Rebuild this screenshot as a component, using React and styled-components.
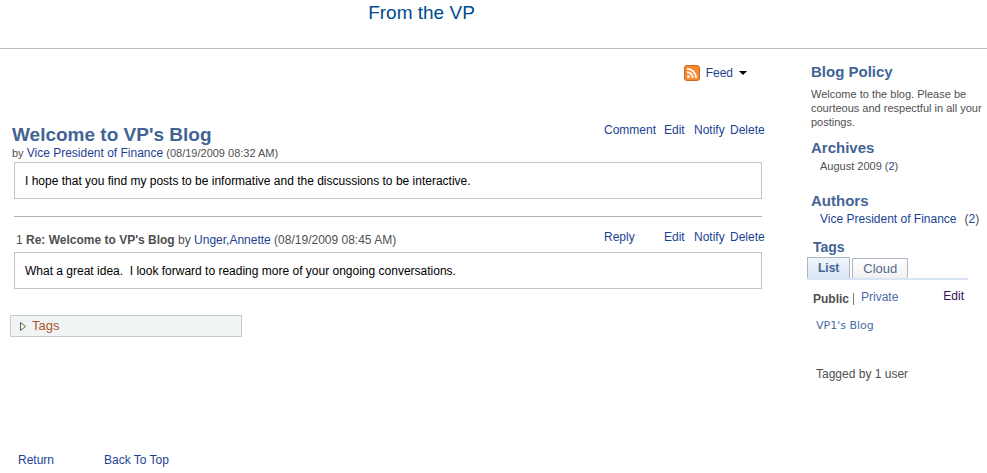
import React, { useState } from "react";
import styled, { createGlobalStyle } from "styled-components";

const GlobalStyle = createGlobalStyle`
  * {
    box-sizing: border-box;
  }
  body {
    margin: 0;
    background-color: #fff;
    color: #505050;
    font-family: "Liberation Sans", Arial, sans-serif;
    font-size: 12px;
    line-height: 14px;
  }
  h1, h2, h3, p {
    margin: 0;
  }
  button {
    font: inherit;
    margin: 0;
    padding: 0;
    border: 0;
    background: none;
    cursor: pointer;
  }
`;

const Header = styled.header`
  height: 49px;
  padding-right: 144px;
  border-bottom: 1px solid #bbb;
  text-align: center;
`;

const PageTitle = styled.h1`
  color: #004b91;
  font-size: 19px;
  font-weight: normal;
  line-height: 26px;
`;

const Columns = styled.div`
  display: flex;
  align-items: flex-start;
  gap: 41px;
`;

const Main = styled.main`
  flex: 1;
  padding: 16px 0 0 10px;
`;

const Link = styled.a`
  color: ${(props) => props.$color || "#1c3f94"};
  text-decoration: none;
`;

const FeedRow = styled.div`
  display: flex;
  justify-content: flex-end;
  padding-right: 19px;
`;

const FeedButton = styled.button`
  display: flex;
  align-items: center;
  gap: 6px;
  height: 16px;
  color: #1c3f94;
`;

const PostHeader = styled.div`
  display: flex;
  justify-content: space-between;
  align-items: flex-start;
  margin-top: ${(props) => props.$top}px;
`;

const PostTitle = styled.h2`
  padding: 1px 0 0 2px;
  color: #426494;
  font-size: 19px;
  line-height: 22px;
`;

const Byline = styled.p`
  padding-left: 2px;
  font-size: 11px;

  a {
    font-size: 12px;
  }
`;

const ReplyTitle = styled.p`
  padding: 3px 0 3px 6px;
`;

const Actions = styled.nav`
  display: grid;
  grid-template-columns: 60px 30px 36px 36px;
  white-space: nowrap;

  a:nth-child(2) {
    grid-column: 2;
  }
`;

const PostBody = styled.p`
  margin: 2px 4px 0;
  padding: 11px 10px 9px;
  border: 1px solid #c4c4c4;
  color: #000;
  line-height: 15px;
  white-space: pre-wrap;
`;

const Divider = styled.hr`
  margin: 17px 4px 0;
  border: 0;
  border-top: 1px solid #b4b4b4;
`;

const TagsToggle = styled.button`
  display: flex;
  align-items: center;
  gap: 6px;
  width: 232px;
  height: 22px;
  margin-top: 26px;
  padding-left: 9px;
  border: 1px solid #c5ccd1;
  background-color: #f0f4f5;
  color: #ad5728;
  font-size: 13px;
`;

const Footer = styled.footer`
  display: flex;
  gap: 50px;
  margin-top: 116px;
  padding-left: 8px;
`;

const Sidebar = styled.aside`
  width: 180px;
  padding-top: 14px;
`;

const SideTitle = styled.h3`
  margin-top: ${(props) => props.$top || 0}px;
  padding-left: ${(props) => props.$left || 4}px;
  color: #426494;
  font-size: ${(props) => props.$size || 15}px;
  line-height: 18px;
`;

const Policy = styled.p`
  margin-top: 6px;
  padding-left: 4px;
  font-size: 11px;
`;

const SideItem = styled.p`
  display: flex;
  gap: ${(props) => props.$gap}px;
  margin-top: 2px;
  padding-left: 13px;
  font-size: ${(props) => props.$size}px;
  white-space: nowrap;
`;

const TabList = styled.div`
  display: flex;
  align-items: flex-end;
  gap: 2px;
  width: 161px;
  margin-top: 1px;
  border-bottom: 2px solid #d9e5f4;
`;

const Tab = styled.button`
  height: ${(props) => (props.$active ? 21 : 20)}px;
  padding: 0 10px;
  border: 1px solid #aeb6c6;
  border-bottom: 0;
  background: ${(props) =>
    props.$active
      ? "linear-gradient(#f1f6fc, #d9e5f4)"
      : "linear-gradient(#fff, #f0f0f0)"};
  color: ${(props) => (props.$active ? "#426494" : "#536c8d")};
  font-weight: ${(props) => (props.$active ? "bold" : "normal")};
  font-size: ${(props) => (props.$active ? 12 : 13)}px;
`;

const TagFilter = styled.div`
  display: flex;
  align-items: flex-start;
  width: 161px;
  margin-top: 9px;
  padding: 0 4px 0 6px;
`;

const PublicLabel = styled.strong`
  padding: 3px 4px 0 0;
`;

const PrivateLink = styled(Link)`
  flex: 1;
  margin-top: 4px;
  padding-left: 7px;
  border-left: 1px solid #777;
  line-height: 16px;

  span {
    display: block;
    margin-top: -4px;
  }
`;

const TagLink = styled(Link)`
  display: block;
  margin: 13px 0 0 9px;
  font-family: "DejaVu Sans", Verdana, sans-serif;
  font-size: 11px;
`;

const TaggedBy = styled.p`
  margin-top: 34px;
  padding-left: 9px;
`;

const FeedIcon = () => (
  <svg width="16" height="16" viewBox="0 0 16 16" aria-hidden="true">
    <rect x="0.5" y="0.5" width="15" height="15" rx="2.5" fill="#f98b2f" stroke="#d3661f" />
    <circle cx="4.4" cy="11.7" r="1.4" fill="#fff" />
    <path d="M3 7.3a5.7 5.7 0 0 1 5.8 5.8M3 3.9a9.2 9.2 0 0 1 9.2 9.2" fill="none" stroke="#fff" strokeWidth="1.9" />
  </svg>
);

const App = () => {
  const [tab, setTab] = useState("List");

  return (
    <>
      <GlobalStyle />
      <Header>
        <PageTitle>From the VP</PageTitle>
      </Header>
      <Columns>
        <Main>
          <FeedRow>
            <FeedButton>
              <FeedIcon />
              Feed
              <svg width="8" height="4" viewBox="0 0 8 4" aria-hidden="true">
                <path d="M0 0h8L4 4z" fill="#000" />
              </svg>
            </FeedButton>
          </FeedRow>

          <PostHeader $top={42}>
            <PostTitle>Welcome to VP's Blog</PostTitle>
            <Actions>
              <Link href="#comment">Comment</Link>
              <Link href="#edit">Edit</Link>
              <Link href="#notify">Notify</Link>
              <Link href="#delete">Delete</Link>
            </Actions>
          </PostHeader>
          <Byline>
            by <Link href="#author">Vice President of Finance</Link> (08/19/2009 08:32 AM)
          </Byline>
          <PostBody>
            I hope that you find my posts to be informative and the discussions to be interactive.
          </PostBody>

          <Divider />

          <PostHeader $top={13}>
            <ReplyTitle>
              1 <strong>Re: Welcome to VP's Blog</strong> by{" "}
              <Link href="#unger">Unger,Annette</Link> (08/19/2009 08:45 AM)
            </ReplyTitle>
            <Actions>
              <Link href="#reply">Reply</Link>
              <Link href="#edit-reply">Edit</Link>
              <Link href="#notify-reply">Notify</Link>
              <Link href="#delete-reply">Delete</Link>
            </Actions>
          </PostHeader>
          <PostBody>
            {"What a great idea.  I look forward to reading more of your ongoing conversations."}
          </PostBody>

          <TagsToggle>
            <svg width="6" height="9" viewBox="0 0 6 9" aria-hidden="true">
              <path d="M0.5 0.5v8l5-4z" fill="#fdfdf0" stroke="#5f5c46" />
            </svg>
            Tags
          </TagsToggle>

          <Footer>
            <Link href="#return">Return</Link>
            <Link href="#top">Back To Top</Link>
          </Footer>
        </Main>

        <Sidebar>
          <SideTitle>Blog Policy</SideTitle>
          <Policy>
            Welcome to the blog. Please be courteous and respectful in all your postings.
          </Policy>

          <SideTitle $top={10}>Archives</SideTitle>
          <SideItem $size={11} $gap={3}>
            <span>August 2009</span>
            <span>
              (<Link href="#august">2</Link>)
            </span>
          </SideItem>

          <SideTitle $top={19}>Authors</SideTitle>
          <SideItem $size={12} $gap={8}>
            <Link href="#finance">Vice President of Finance</Link>
            <span>
              (<Link href="#posts">2</Link>)
            </span>
          </SideItem>

          <SideTitle $top={12} $left={6} $size={14}>Tags</SideTitle>
          <TabList role="tablist">
            {["List", "Cloud"].map((name) => (
              <Tab
                key={name}
                role="tab"
                aria-selected={tab === name}
                $active={tab === name}
                onClick={() => setTab(name)}
              >
                {name}
              </Tab>
            ))}
          </TabList>
          <TagFilter>
            <PublicLabel>Public</PublicLabel>
            <PrivateLink href="#private" $color="#4a6da3">
              <span>Private</span>
            </PrivateLink>
            <Link href="#edit-tags" $color="#2b1452">Edit</Link>
          </TagFilter>
          <TagLink href="#vp1" $color="#4a6da3">VP1's Blog</TagLink>
          <TaggedBy>Tagged by 1 user</TaggedBy>
        </Sidebar>
      </Columns>
    </>
  );
};

export default App;
